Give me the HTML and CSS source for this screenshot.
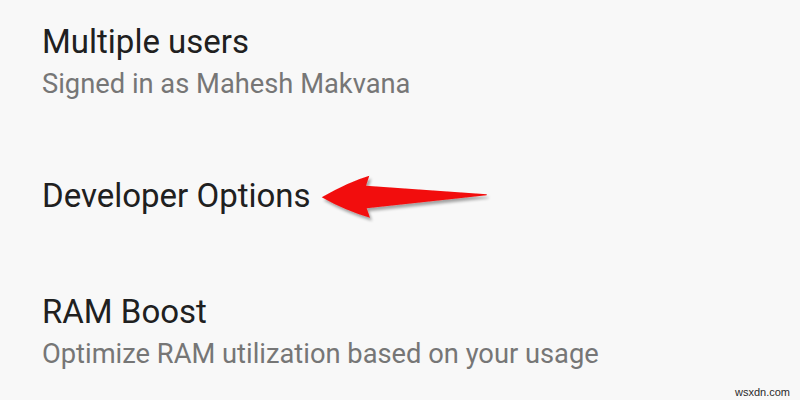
FILE: index.html
```html
<!DOCTYPE html>
<html>
<head>
<meta charset="utf-8">
<link rel="stylesheet" href="styles.css">
</head>
<body>
<div class="screen">
  <div class="list">
    <div class="item">
      <div class="title">Multiple users</div>
      <div class="subtitle">Signed in as Mahesh Makvana</div>
    </div>
    <div class="item">
      <div class="title">Developer Options</div>
    </div>
    <div class="item">
      <div class="title">RAM Boost</div>
      <div class="subtitle">Optimize RAM utilization based on your usage</div>
    </div>
  </div>
  <svg class="arrow" width="190" height="60" viewBox="0 0 190 60">
    <defs>
      <filter id="sh" x="-10%" y="-30%" width="130%" height="170%">
        <feGaussianBlur in="SourceAlpha" stdDeviation="1.6"/>
        <feOffset dx="1.5" dy="2.5" result="b"/>
        <feComponentTransfer><feFuncA type="linear" slope="0.35"/></feComponentTransfer>
        <feMerge><feMergeNode/><feMergeNode in="SourceGraphic"/></feMerge>
      </filter>
    </defs>
    <path filter="url(#sh)" fill="#f20d0d" d="M11.7 32.3 Q38 17 59.3 10.7 L56 20.7 L176.7 29.3 L176.7 30.3 L56.7 43.3 L60 52.7 Q36 46 11.7 32.3 Z"/>
  </svg>
  <div class="watermark">wsxdn.com</div>
</div>
</body>
</html>
```
FILE: styles.css
```css
html, body {
  margin: 0;
  padding: 0;
}
body {
  background: #f8f8f8;
  font-family: Roboto, "Noto Sans", sans-serif;
}
.screen {
  position: relative;
  width: 800px;
  height: 400px;
  overflow: hidden;
}
.list {
  display: flex;
  flex-direction: column;
  gap: 76px;
  padding: 22px 0 0 42px;
}
.item {
  display: flex;
  flex-direction: column;
  gap: 6px;
}
.title {
  font-size: 33px;
  line-height: 40px;
  color: #202020;
  white-space: nowrap;
}
.subtitle {
  font-size: 27.3px;
  line-height: 32px;
  color: #767676;
  white-space: nowrap;
}
.arrow {
  position: absolute;
  left: 310px;
  top: 165px;
}
.watermark {
  position: absolute;
  right: 10px;
  bottom: 2px;
  font-family: "Liberation Sans", Arial, sans-serif;
  font-size: 11px;
  color: #2a2a2a;
}
```
